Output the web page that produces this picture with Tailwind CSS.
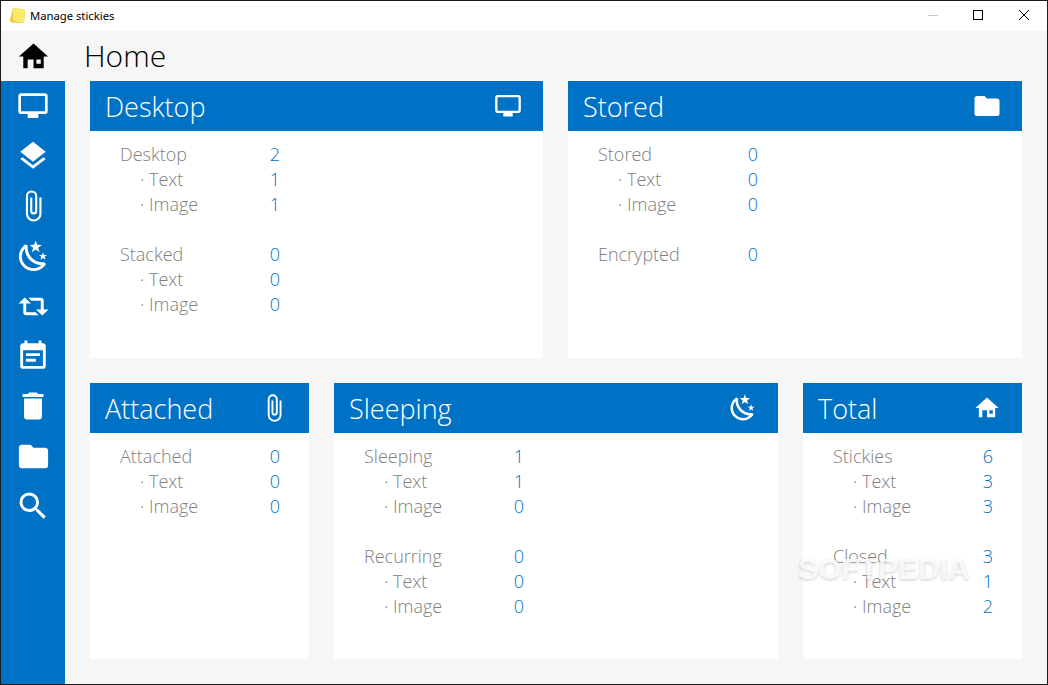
<!DOCTYPE html>
<html lang="en">

<head>
    <meta charset="UTF-8">
    <title>Manage stickies</title>
    <script src="https://cdn.jsdelivr.net/npm/@tailwindcss/browser@4"></script>
</head>

<body class="h-[685px] w-[1048px] overflow-hidden bg-white font-['Open_Sans',sans-serif]">
    <div class="relative flex h-[685px] flex-col border border-[#1c1c1c]">
        <!-- Title bar -->
        <div class="flex h-[30px] shrink-0 items-center bg-white">
            <svg class="mb-[2px] ml-[8px] h-[17px] w-[17px]" viewBox="0 0 17 17">
                <path d="M4 1L16 2.5L15 16L3 15.5Q1 15 1 13Z" fill="#e3c43a" />
                <path d="M4.5 1L16 2.5L15 16L4 14Q3 9 4.5 1Z" fill="#fbe96a" />
            </svg>
            <span class="ml-[4px] font-['Noto_Sans',sans-serif] text-[11.25px] text-black">Manage stickies</span>
            <div class="mb-[2px] ml-auto flex items-center">
                <div class="mr-[35px] h-px w-[10px] bg-[#c8c8c8]"></div>
                <div class="mr-[36px] h-[10px] w-[10px] border border-black"></div>
                <svg class="mr-[18px] h-[10px] w-[10px]" viewBox="0 0 10 10" fill="none" stroke="#000">
                    <path d="M0 0L10 10M10 0L0 10" />
                </svg>
            </div>
        </div>

        <div class="flex min-h-0 flex-1 bg-[#f6f6f6]">
            <!-- Sidebar -->
            <div class="flex w-[64px] shrink-0 flex-col">
                <div class="flex h-[50px] items-center justify-center">
                    <svg class="h-[35px] w-[35px]" viewBox="0 0 24 24" fill="#000"><path d="M8,20H5V12H2L12,3L22,12H19V20H12V14H8V20M14,14V17H17V14H14Z" /></svg>
                </div>
                <div class="flex flex-1 flex-col bg-[#0072c6]">
                    <div class="flex h-[50px] items-center justify-center"><svg class="h-[32px] w-[32px]" viewBox="0 0 24 24" fill="#fff"><path d="M21,16H3V4.5H21M21,2.5H3C1.89,2.5 1,3.39 1,4.5V16A2,2 0 0,0 3,18H8V21H16V18H21A2,2 0 0,0 23,16V4.5C23,3.39 22.1,2.5 21,2.5Z" /></svg></div>
                    <div class="flex h-[50px] items-center justify-center"><svg class="h-[34px] w-[34px]" viewBox="0 0 24 24" fill="#fff"><path d="M12,16L19.36,10.27L21,9L12,2L3,9L4.63,10.27M12,18.54L4.62,12.81L3,14.07L12,21.07L21,14.07L19.37,12.81L12,18.54Z" /></svg></div>
                    <div class="flex h-[50px] items-center justify-center"><svg class="h-[34px] w-[34px]" viewBox="0 0 24 24" fill="#fff"><path d="M16.5,6V17.5A4,4 0 0,1 12.5,21.5A4,4 0 0,1 8.5,17.5V5A2.5,2.5 0 0,1 11,2.5A2.5,2.5 0 0,1 13.5,5V15.5A1,1 0 0,1 12.5,16.5A1,1 0 0,1 11.5,15.5V6H10V15.5A2.5,2.5 0 0,0 12.5,18A2.5,2.5 0 0,0 15,15.5V5A4,4 0 0,0 11,1A4,4 0 0,0 7,5V17.5A5.5,5.5 0 0,0 12.5,23A5.5,5.5 0 0,0 18,17.5V6H16.5Z" /></svg></div>
                    <div class="flex h-[50px] items-center justify-center"><svg class="h-[35px] w-[35px]" viewBox="0 0 24 24" fill="#fff"><path d="M17.75,4.09L15.22,6.03L16.13,9.09L13.5,7.28L10.87,9.09L11.78,6.03L9.25,4.09L12.44,4L13.5,1L14.56,4L17.75,4.09M21.25,11L19.61,12.25L20.2,14.23L18.5,13.06L16.8,14.23L17.39,12.25L15.75,11L17.81,10.95L18.5,9L19.19,10.95L21.25,11M18.97,15.95C19.8,15.87 20.69,17.05 20.16,17.8C19.84,18.25 19.5,18.67 19.08,19.07C15.17,23 8.84,23 4.94,19.07C1.03,15.17 1.03,8.83 4.94,4.93C5.34,4.53 5.76,4.17 6.21,3.85C6.96,3.32 8.14,4.21 8.06,5.04C7.79,7.9 8.75,10.87 10.95,13.06C13.14,15.26 16.1,16.22 18.97,15.95M17.33,17.97C14.5,17.81 11.7,16.64 9.53,14.5C7.36,12.31 6.2,9.5 6.04,6.68C3.23,9.82 3.34,14.64 6.35,17.66C9.37,20.67 14.19,20.78 17.33,17.97Z" /></svg></div>
                    <div class="flex h-[50px] items-center justify-center"><svg class="h-[35px] w-[35px]" viewBox="0 0 24 24" fill="#fff"><path d="M6,5.75L10.25,10H7V16H13.5L15.5,18H7A2,2 0 0,1 5,16V10H1.75L6,5.75M18,18.25L13.75,14H17V8H10.5L8.5,6H17A2,2 0 0,1 19,8V14H22.25L18,18.25Z" /></svg></div>
                    <div class="flex h-[50px] items-center justify-center"><svg class="h-[34px] w-[34px]" viewBox="0 0 24 24" fill="#fff"><path d="M14,14H7V16H14M19,19H5V8H19M19,3H18V1H16V3H8V1H6V3H5C3.89,3 3,3.9 3,5V19A2,2 0 0,0 5,21H19A2,2 0 0,0 21,19V5A2,2 0 0,0 19,3M17,10H7V12H17V10Z" /></svg></div>
                    <div class="flex h-[50px] items-center justify-center"><svg class="h-[36px] w-[36px]" viewBox="0 0 24 24" fill="#fff"><path d="M19,4H15.5L14.5,3H9.5L8.5,4H5V6H19M6,19A2,2 0 0,0 8,21H16A2,2 0 0,0 18,19V7H6V19Z" /></svg></div>
                    <div class="flex h-[50px] items-center justify-center"><svg class="h-[35px] w-[35px]" viewBox="0 0 24 24" fill="#fff"><path d="M10,4H4C2.89,4 2,4.89 2,6V18A2,2 0 0,0 4,20H20A2,2 0 0,0 22,18V8C22,6.89 21.1,6 20,6H12L10,4Z" /></svg></div>
                    <div class="flex h-[50px] items-center justify-center"><svg class="h-[36px] w-[36px]" viewBox="0 0 24 24" fill="#fff"><path d="M9.5,3A6.5,6.5 0 0,1 16,9.5C16,11.11 15.41,12.59 14.44,13.73L14.71,14H15.5L20.5,19L19,20.5L14,15.5V14.71L13.73,14.44C12.59,15.41 11.11,16 9.5,16A6.5,6.5 0 0,1 3,9.5A6.5,6.5 0 0,1 9.5,3M9.5,5C7,5 5,7 5,9.5C5,12 7,14 9.5,14C12,14 14,12 14,9.5C14,7 12,5 9.5,5Z" /></svg></div>
                </div>
            </div>

            <!-- Main -->
            <div class="flex min-w-0 flex-1 flex-col">
                <h1 class="ml-[19px] flex h-[50px] items-center pb-[2px] text-[30px] font-light text-black">Home</h1>

                <div class="ml-[25px] flex flex-col gap-[25px] pr-[25px]">
                    <!-- Top row -->
                    <div class="flex gap-[25px]">
                        <div class="h-[277px] w-[453px] bg-white">
                            <div class="flex h-[50px] items-center justify-between bg-[#0072c6] pr-[21px] pl-[15px]">
                                <span class="mt-[2px] text-[27px] font-light text-white">Desktop</span>
                                <svg class="h-[28px] w-[28px]" viewBox="0 0 24 24" fill="#fff"><path d="M21,16H3V4.5H21M21,2.5H3C1.89,2.5 1,3.39 1,4.5V16A2,2 0 0,0 3,18H8V21H16V18H21A2,2 0 0,0 23,16V4.5C23,3.39 22.1,2.5 21,2.5Z" /></svg>
                            </div>
                            <div class="w-[190px] pt-[11px] pl-[30px] text-[18px] leading-[25px] font-light text-[#808080]">
                                <div class="flex justify-between"><span>Desktop</span><span class="text-[#0072c6]">2</span></div>
                                <div class="flex justify-between"><span class="pl-[20px]">· Text</span><span class="text-[#0072c6]">1</span></div>
                                <div class="flex justify-between"><span class="pl-[20px]">· Image</span><span class="text-[#0072c6]">1</span></div>
                                <div class="mt-[25px] flex justify-between"><span>Stacked</span><span class="text-[#0072c6]">0</span></div>
                                <div class="flex justify-between"><span class="pl-[20px]">· Text</span><span class="text-[#0072c6]">0</span></div>
                                <div class="flex justify-between"><span class="pl-[20px]">· Image</span><span class="text-[#0072c6]">0</span></div>
                            </div>
                        </div>

                        <div class="h-[277px] w-[454px] bg-white">
                            <div class="flex h-[50px] items-center justify-between bg-[#0072c6] pr-[20px] pl-[15px]">
                                <span class="mt-[2px] text-[27px] font-light text-white">Stored</span>
                                <svg class="h-[30px] w-[30px]" viewBox="0 0 24 24" fill="#fff"><path d="M10,4H4C2.89,4 2,4.89 2,6V18A2,2 0 0,0 4,20H20A2,2 0 0,0 22,18V8C22,6.89 21.1,6 20,6H12L10,4Z" /></svg>
                            </div>
                            <div class="w-[190px] pt-[11px] pl-[30px] text-[18px] leading-[25px] font-light text-[#808080]">
                                <div class="flex justify-between"><span>Stored</span><span class="text-[#0072c6]">0</span></div>
                                <div class="flex justify-between"><span class="pl-[20px]">· Text</span><span class="text-[#0072c6]">0</span></div>
                                <div class="flex justify-between"><span class="pl-[20px]">· Image</span><span class="text-[#0072c6]">0</span></div>
                                <div class="mt-[25px] flex justify-between"><span>Encrypted</span><span class="text-[#0072c6]">0</span></div>
                            </div>
                        </div>
                    </div>

                    <!-- Bottom row -->
                    <div class="flex gap-[25px]">
                        <div class="h-[276px] w-[219px] bg-white">
                            <div class="flex h-[50px] items-center justify-between bg-[#0072c6] pr-[20px] pl-[15px]">
                                <span class="mt-[2px] text-[27px] font-light text-white">Attached</span>
                                <svg class="h-[30px] w-[30px]" viewBox="0 0 24 24" fill="#fff"><path d="M16.5,6V17.5A4,4 0 0,1 12.5,21.5A4,4 0 0,1 8.5,17.5V5A2.5,2.5 0 0,1 11,2.5A2.5,2.5 0 0,1 13.5,5V15.5A1,1 0 0,1 12.5,16.5A1,1 0 0,1 11.5,15.5V6H10V15.5A2.5,2.5 0 0,0 12.5,18A2.5,2.5 0 0,0 15,15.5V5A4,4 0 0,0 11,1A4,4 0 0,0 7,5V17.5A5.5,5.5 0 0,0 12.5,23A5.5,5.5 0 0,0 18,17.5V6H16.5Z" /></svg>
                            </div>
                            <div class="w-[190px] pt-[11px] pl-[30px] text-[18px] leading-[25px] font-light text-[#808080]">
                                <div class="flex justify-between"><span>Attached</span><span class="text-[#0072c6]">0</span></div>
                                <div class="flex justify-between"><span class="pl-[20px]">· Text</span><span class="text-[#0072c6]">0</span></div>
                                <div class="flex justify-between"><span class="pl-[20px]">· Image</span><span class="text-[#0072c6]">0</span></div>
                            </div>
                        </div>

                        <div class="h-[276px] w-[444px] bg-white">
                            <div class="flex h-[50px] items-center justify-between bg-[#0072c6] pr-[20px] pl-[15px]">
                                <span class="mt-[2px] text-[27px] font-light text-white">Sleeping</span>
                                <svg class="h-[30px] w-[30px]" viewBox="0 0 24 24" fill="#fff"><path d="M17.75,4.09L15.22,6.03L16.13,9.09L13.5,7.28L10.87,9.09L11.78,6.03L9.25,4.09L12.44,4L13.5,1L14.56,4L17.75,4.09M21.25,11L19.61,12.25L20.2,14.23L18.5,13.06L16.8,14.23L17.39,12.25L15.75,11L17.81,10.95L18.5,9L19.19,10.95L21.25,11M18.97,15.95C19.8,15.87 20.69,17.05 20.16,17.8C19.84,18.25 19.5,18.67 19.08,19.07C15.17,23 8.84,23 4.94,19.07C1.03,15.17 1.03,8.83 4.94,4.93C5.34,4.53 5.76,4.17 6.21,3.85C6.96,3.32 8.14,4.21 8.06,5.04C7.79,7.9 8.75,10.87 10.95,13.06C13.14,15.26 16.1,16.22 18.97,15.95M17.33,17.97C14.5,17.81 11.7,16.64 9.53,14.5C7.36,12.31 6.2,9.5 6.04,6.68C3.23,9.82 3.34,14.64 6.35,17.66C9.37,20.67 14.19,20.78 17.33,17.97Z" /></svg>
                            </div>
                            <div class="w-[190px] pt-[11px] pl-[30px] text-[18px] leading-[25px] font-light text-[#808080]">
                                <div class="flex justify-between"><span>Sleeping</span><span class="text-[#0072c6]">1</span></div>
                                <div class="flex justify-between"><span class="pl-[20px]">· Text</span><span class="text-[#0072c6]">1</span></div>
                                <div class="flex justify-between"><span class="pl-[20px]">· Image</span><span class="text-[#0072c6]">0</span></div>
                                <div class="mt-[25px] flex justify-between"><span>Recurring</span><span class="text-[#0072c6]">0</span></div>
                                <div class="flex justify-between"><span class="pl-[20px]">· Text</span><span class="text-[#0072c6]">0</span></div>
                                <div class="flex justify-between"><span class="pl-[20px]">· Image</span><span class="text-[#0072c6]">0</span></div>
                            </div>
                        </div>

                        <div class="h-[276px] w-[219px] bg-white">
                            <div class="flex h-[50px] items-center justify-between bg-[#0072c6] pr-[21px] pl-[15px]">
                                <span class="mt-[2px] text-[27px] font-light text-white">Total</span>
                                <svg class="h-[28px] w-[28px]" viewBox="0 0 24 24" fill="#fff"><path d="M8,20H5V12H2L12,3L22,12H19V20H12V14H8V20M14,14V17H17V14H14Z" /></svg>
                            </div>
                            <div class="w-[190px] pt-[11px] pl-[30px] text-[18px] leading-[25px] font-light text-[#808080]">
                                <div class="flex justify-between"><span>Stickies</span><span class="text-[#0072c6]">6</span></div>
                                <div class="flex justify-between"><span class="pl-[20px]">· Text</span><span class="text-[#0072c6]">3</span></div>
                                <div class="flex justify-between"><span class="pl-[20px]">· Image</span><span class="text-[#0072c6]">3</span></div>
                                <div class="mt-[25px] flex justify-between"><span>Closed</span><span class="text-[#0072c6]">3</span></div>
                                <div class="flex justify-between"><span class="pl-[20px]">· Text</span><span class="text-[#0072c6]">1</span></div>
                                <div class="flex justify-between"><span class="pl-[20px]">· Image</span><span class="text-[#0072c6]">2</span></div>
                            </div>
                        </div>
                    </div>
                </div>
            </div>
        </div>

        <!-- Watermark -->
        <span class="absolute top-[550px] left-[797px] font-['Liberation_Sans',sans-serif] text-[30px] leading-[36px] font-bold text-white/80 [text-shadow:0_1px_3px_rgba(0,0,0,0.2)]">SOFTPEDIA</span>
    </div>
</body>

</html>
